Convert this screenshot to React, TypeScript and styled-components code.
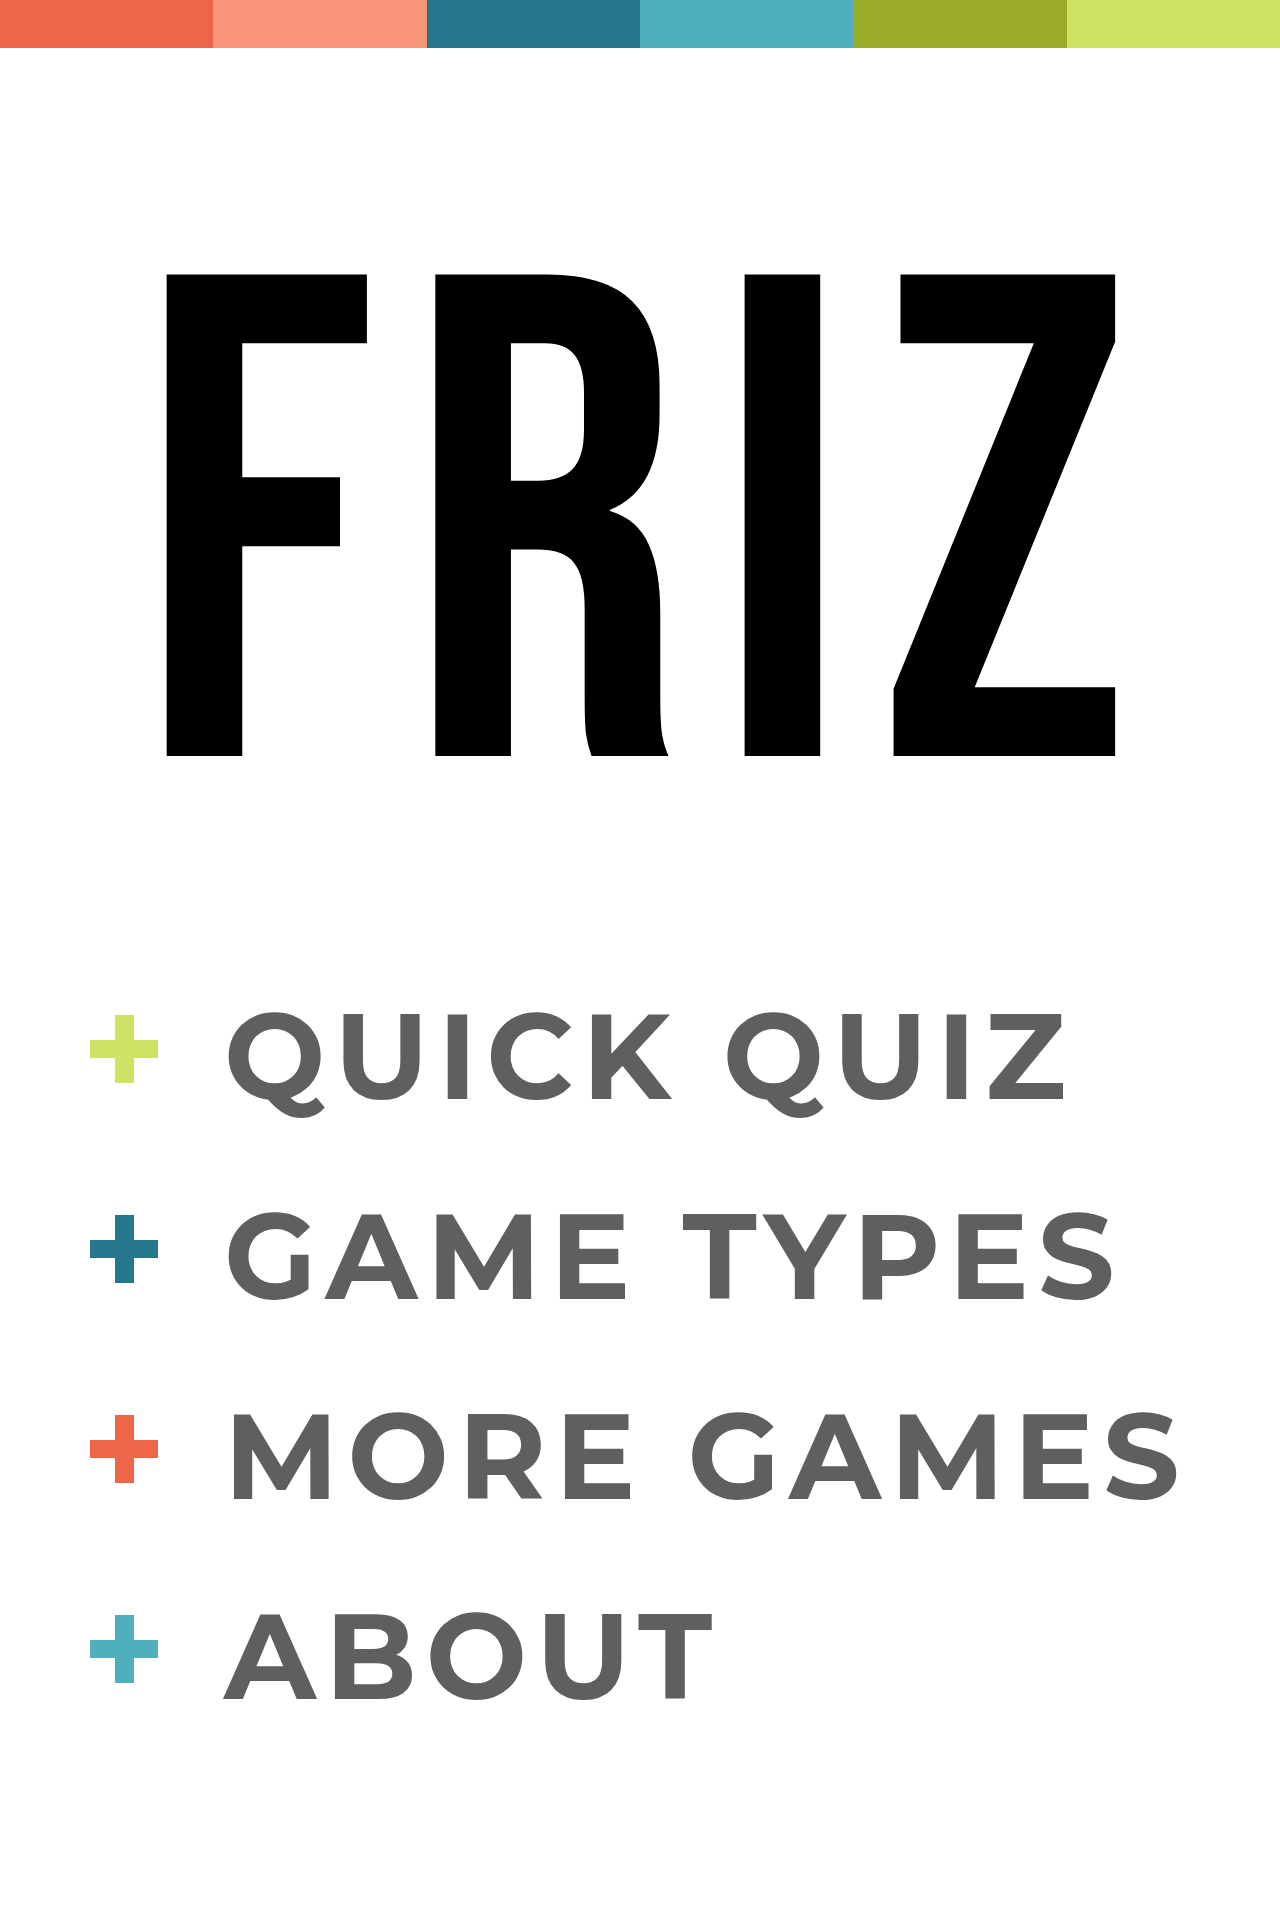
import React from 'react';
import styled, { createGlobalStyle } from 'styled-components';

const colors = {
  coral: '#ed6647',
  peach: '#f99679',
  teal: '#26778b',
  aqua: '#4fafbd',
  olive: '#9aab29',
  lime: '#cde365',
  ink: '#5e605d',
};

const GlobalStyle = createGlobalStyle`
  *, *::before, *::after { box-sizing: border-box; }
  body { margin: 0; background: #fff; }
`;

const Page = styled.div`
  min-height: 100vh;
  background: #fff;
`;

const Stripes = styled.div`
  display: grid;
  grid-template-columns: repeat(6, 1fr);
  height: 48px;
`;

const Stripe = styled.span<{ $color: string }>`
  background: ${(p) => p.$color};
`;

const Main = styled.main`
  padding: 202px 90px 0;
`;

const Title = styled.h1`
  margin: 0;
  color: #000;
  font: 400 688px/600px 'Bebas Neue', 'Roboto Condensed', Roboto, sans-serif;
  letter-spacing: 32px;
  text-indent: 20px;
  text-align: center;
`;

const Menu = styled.ul`
  display: grid;
  gap: 80px;
  margin: 146px 0 0;
  padding: 0;
  list-style: none;
`;

const MenuButton = styled.button`
  display: flex;
  align-items: center;
  gap: 66px;
  padding: 0;
  border: 0;
  background: none;
  color: ${colors.ink};
  font: 700 120px/120px Montserrat, Inter, sans-serif;
  letter-spacing: 9px;
  text-transform: uppercase;
  white-space: nowrap;
  cursor: pointer;
`;

const Plus = styled.svg<{ $color: string }>`
  flex: none;
  width: 68px;
  height: 68px;
  margin-bottom: 14px;
  fill: ${(p) => p.$color};
`;

const items = [
  { label: 'Quick Quiz', color: colors.lime },
  { label: 'Game Types', color: colors.teal },
  { label: 'More Games', color: colors.coral },
  { label: 'About', color: colors.aqua },
];

const stripes = [colors.coral, colors.peach, colors.teal, colors.aqua, colors.olive, colors.lime];

export default function App() {
  return (
    <Page>
      <GlobalStyle />
      <Stripes aria-hidden="true">
        {stripes.map((color) => (
          <Stripe key={color} $color={color} />
        ))}
      </Stripes>
      <Main>
        <Title>FRIZ</Title>
        <Menu>
          {items.map((item) => (
            <li key={item.label}>
              <MenuButton type="button">
                <Plus $color={item.color} viewBox="0 0 68 68" aria-hidden="true">
                  <path d="M25 0H44V25H68V43H44V68H25V43H0V25H25Z" />
                </Plus>
                {item.label}
              </MenuButton>
            </li>
          ))}
        </Menu>
      </Main>
    </Page>
  );
}
